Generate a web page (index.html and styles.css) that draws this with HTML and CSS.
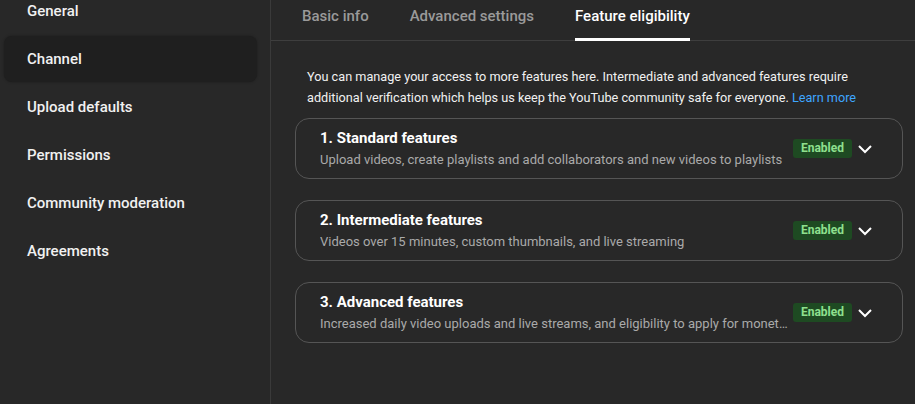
FILE: index.html
```html
<!DOCTYPE html>
<html lang="en">
<head>
  <meta charset="UTF-8" />
  <title>Settings - Feature eligibility</title>
  <link rel="stylesheet" href="styles.css">
</head>
<body>
  <div class="layout">
    <nav class="sidebar">
      <div class="nav-item">General</div>
      <div class="nav-item active">Channel</div>
      <div class="nav-item">Upload defaults</div>
      <div class="nav-item">Permissions</div>
      <div class="nav-item">Community moderation</div>
      <div class="nav-item">Agreements</div>
    </nav>

    <main class="content">
      <div class="tabs">
        <div class="tab">Basic info</div>
        <div class="tab">Advanced settings</div>
        <div class="tab selected">Feature eligibility</div>
      </div>

      <div class="panel">
        <p class="intro">
          You can manage your access to more features here. Intermediate and advanced features require
          additional verification which helps us keep the YouTube community safe for everyone. <a href="#">Learn more</a>
        </p>

        <div class="card">
          <div class="card-text">
            <div class="card-title">1. Standard features</div>
            <div class="card-sub">Upload videos, create playlists and add collaborators and new videos to playlists</div>
          </div>
          <span class="badge">Enabled</span>
          <svg class="chevron" viewBox="0 0 16 16"><path d="M2 5l6 6 6-6" /></svg>
        </div>

        <div class="card">
          <div class="card-text">
            <div class="card-title">2. Intermediate features</div>
            <div class="card-sub">Videos over 15 minutes, custom thumbnails, and live streaming</div>
          </div>
          <span class="badge">Enabled</span>
          <svg class="chevron" viewBox="0 0 16 16"><path d="M2 5l6 6 6-6" /></svg>
        </div>

        <div class="card">
          <div class="card-text">
            <div class="card-title">3. Advanced features</div>
            <div class="card-sub">Increased daily video uploads and live streams, and eligibility to apply for monetization</div>
          </div>
          <span class="badge">Enabled</span>
          <svg class="chevron" viewBox="0 0 16 16"><path d="M2 5l6 6 6-6" /></svg>
        </div>
      </div>
    </main>
  </div>
</body>
</html>
```

FILE: styles.css
```css
body {
  margin: 0;
  background: #282828;
  color: #fff;
  font-family: Roboto, 'Liberation Sans', Arial, sans-serif;
  height: 404px;
  overflow: hidden;
}

.layout {
  display: flex;
  height: 404px;
}

.sidebar {
  flex-shrink: 0;
  width: 271px;
  border-right: 1px solid #3a3a3a;
  padding: 0 13px 0 4px;
  box-sizing: border-box;
  margin-top: -12px;
}

.nav-item {
  height: 46px;
  margin-bottom: 2px;
  display: flex;
  align-items: center;
  padding-left: 23px;
  font-size: 15px;
  font-weight: 500;
  color: #f1f1f1;
  border-radius: 8px;
}

.nav-item.active {
  background: #1f1f1f;
  box-shadow: 0 0 3px rgba(0,0,0,0.3);
}

.content {
  flex: 1;
  min-width: 0;
}

.tabs {
  display: flex;
  gap: 41px;
  padding-left: 31px;
  height: 40px;
  border-bottom: 1px solid #3e3e3e;
}

.tab {
  font-size: 15px;
  font-weight: 500;
  color: #9a9a9a;
  padding-top: 7px;
  box-sizing: border-box;
  height: 40px;
}

.tab.selected {
  color: #fff;
  border-bottom: 3px solid #fff;
  height: 41px;
}

.panel {
  padding: 0 12px 0 24px;
}

.intro {
  margin: 25px 0 10px 12px;
  max-width: 570px;
  font-size: 12.7px;
  line-height: 21px;
  color: #f1f1f1;
}

.intro a {
  color: #3ea6ff;
  text-decoration: none;
}

.card {
  display: flex;
  align-items: center;
  height: 61px;
  box-sizing: border-box;
  border: 1px solid #555;
  border-radius: 14px;
  padding: 0 29px 0 24px;
  margin-bottom: 21px;
}

.card-text {
  flex: 1;
  min-width: 0;
  padding: 2px 4px 0 0;
}

.card-title {
  font-size: 15px;
  font-weight: 700;
  color: #fff;
  line-height: 18px;
}

.card-sub {
  font-size: 13px;
  color: #aaa;
  line-height: 20px;
  white-space: nowrap;
  overflow: hidden;
  text-overflow: ellipsis;
  margin-top: 3px;
}

.badge {
  flex-shrink: 0;
  background: #1e4a22;
  color: #8ee08e;
  font-size: 12px;
  font-weight: 700;
  padding: 2px 8px;
  line-height: 15px;
  border-radius: 3px;
}

.chevron {
  flex-shrink: 0;
  width: 16px;
  height: 16px;
  margin-left: 5px;
  fill: none;
  stroke: #fff;
  stroke-width: 2;
}
```
